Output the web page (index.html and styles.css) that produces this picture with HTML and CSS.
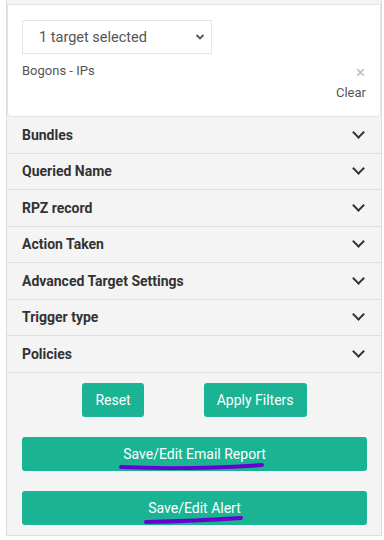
FILE: index.html
```html
<!DOCTYPE html>
<html lang="en">

<head>
    <meta charset="UTF-8">
    <meta name="viewport" content="width=device-width, initial-scale=1.0">
    <title>Filters</title>
    <link rel="stylesheet" href="styles.css">
</head>

<body>
    <div class="panel">
        <div class="target-box">
            <div class="select">
                <span>1 target selected</span>
                <svg class="select-arrow" width="10" height="8" viewBox="0 0 10 8">
                    <polyline points="1.5,2 5,5.5 8.5,2" fill="none" stroke="#555" stroke-width="1.8"/>
                </svg>
            </div>
            <div class="target-row">
                <span class="target-name">Bogons - IPs</span>
                <span class="remove">&times;</span>
            </div>
            <div class="clear">Clear</div>
        </div>

        <div class="filter">Bundles <span class="chev"></span></div>
        <div class="filter">Queried Name <span class="chev"></span></div>
        <div class="filter">RPZ record <span class="chev"></span></div>
        <div class="filter">Action Taken <span class="chev"></span></div>
        <div class="filter">Advanced Target Settings <span class="chev"></span></div>
        <div class="filter">Trigger type <span class="chev"></span></div>
        <div class="filter">Policies <span class="chev"></span></div>

        <div class="actions">
            <button class="btn">Reset</button>
            <button class="btn">Apply Filters</button>
        </div>
        <button class="btn wide">Save/Edit Email Report</button>
        <button class="btn wide alert">Save/Edit Alert</button>

        <!-- hand drawn marks over the two save buttons -->
        <svg class="marks" width="376" height="540" viewBox="0 0 376 540">
            <path d="M120 467 Q 185 470 261 465" fill="none" stroke="#6a00cf" stroke-width="4" stroke-linecap="round"/>
            <path d="M145 522 Q 195 521 240 518" fill="none" stroke="#6a00cf" stroke-width="4" stroke-linecap="round"/>
        </svg>
    </div>
</body>

</html>
```

FILE: styles.css
```css
body {
    margin: 0;
    background: #fff;
    font-family: Roboto, "Liberation Sans", sans-serif;
}

.panel {
    position: relative;
    width: 374px;
    margin-left: 6px;
    padding-top: 4px;
    padding-bottom: 10px;
    background: #f4f4f4;
    border: 1px solid #ddd;
    border-top: none;
}

.target-box {
    background: #fff;
    border: 1px solid #e3e3e3;
    border-radius: 0 0 4px 4px;
    padding: 15px 14px 16px 14px;
}

.select {
    display: flex;
    align-items: center;
    justify-content: space-between;
    height: 32px;
    border: 1px solid #e5e5e5;
    padding: 0 6px 0 16px;
    box-sizing: content-box;
    width: 166px;
    font-size: 14.5px;
    color: #555;
}

.target-row {
    display: flex;
    justify-content: space-between;
    align-items: flex-start;
    margin-top: 9px;
    font-size: 13px;
    color: #555;
}

.remove {
    font-size: 17px;
    line-height: 17px;
    color: #bbb;
    margin-right: 1px;
    margin-top: 1px;
}

.clear {
    text-align: right;
    font-size: 13px;
    color: #555;
    margin-top: 4px;
}

.filter {
    display: flex;
    justify-content: space-between;
    align-items: center;
    height: 35.5px;
    padding: 0 15px;
    border-bottom: 1px solid #ddd;
    font-size: 14px;
    font-weight: 700;
    color: #333;
}

.chev {
    width: 7px;
    height: 7px;
    border-right: 2.5px solid #333;
    border-bottom: 2.5px solid #333;
    transform: rotate(45deg);
    margin: -5px 3px 0 0;
}

.actions {
    display: flex;
    justify-content: center;
    gap: 60px;
    margin-top: 10px;
    padding-left: 1px;
}

.btn {
    display: block;
    height: 34px;
    padding: 0 13px;
    background: #1ab394;
    border: none;
    border-radius: 3px;
    color: #fff;
    font-family: Roboto, "Liberation Sans", sans-serif;
    font-size: 14px;
}

.btn.wide {
    width: 345px;
    margin: 20px 0 0 15px;
}

.btn.alert {
    margin-top: 20px;
}

.marks {
    position: absolute;
    left: -6px;
    top: 0;
    pointer-events: none;
}
```
